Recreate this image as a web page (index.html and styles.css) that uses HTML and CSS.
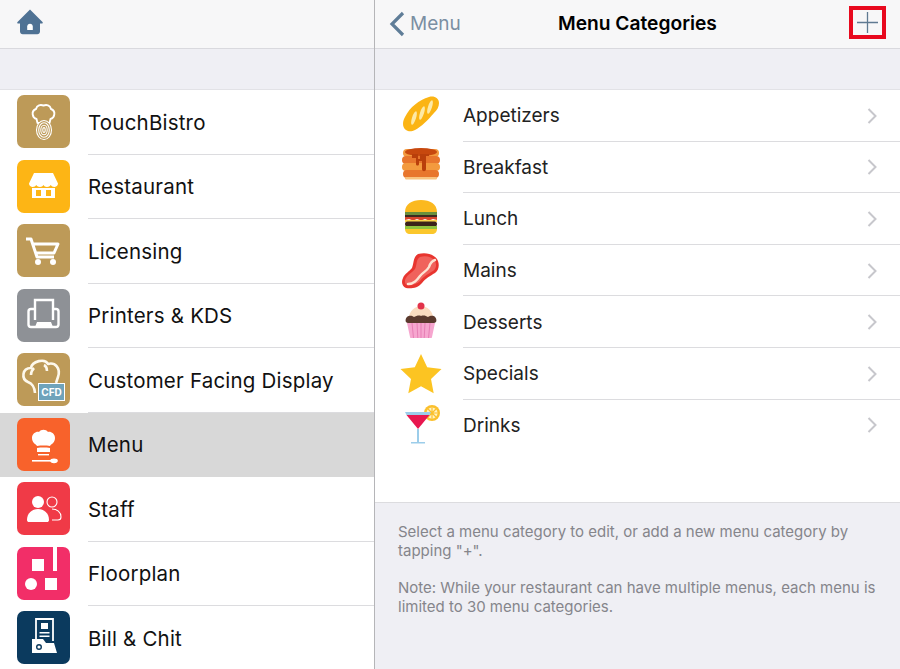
FILE: index.html
```html
<!DOCTYPE html>
<html lang="en">
<head>
  <meta charset="UTF-8">
  <meta name="viewport" content="width=device-width, initial-scale=1.0">
  <title>Menu Categories</title>
  <link rel="stylesheet" href="styles.css">
</head>
<body>
  <div class="app">
    <!-- Left pane: settings -->
    <div class="pane left-pane">
      <header class="navbar">
        <svg class="home-icon" width="28" height="28" viewBox="0 0 28 28">
          <path fill="#4f7294" d="M14 1.500 1.500 14c-.6.7-.2 1.600.7 1.600H4v8c0 1.500 1.200 2.700 2.700 2.700h14.600c1.500 0 2.700-1.200 2.700-2.700v-8h1.800c.9 0 1.300-.9.7-1.600z"/>
          <path fill="#fff" d="M11.200 22v-3.400c0-1.600 1.200-2.800 2.800-2.800s2.800 1.200 2.800 2.800V22z"/>
        </svg>
      </header>
      <div class="band"></div>

      <ul class="settings-list">
        <li class="settings-item">
          <span class="tile tile-gold">
            <svg viewBox="0 0 53 53" width="53" height="53" fill="none" stroke="#fff">
              <path stroke-width="1.900" stroke-linejoin="round" d="M19.500 24c-4-1-6-8-.5-10 1-4 4.500-4.500 7.500-3.500 3-1 6.500-.5 7.500 3.500 5.500 2 3.500 9-.5 10l-1 4H20.500z"/>
              <ellipse cx="27" cy="35" rx="7.500" ry="9.500" fill="#bd9a58" stroke-width="1.100"/>
              <ellipse cx="27" cy="35" rx="5.300" ry="7.200" stroke-width="1.100"/>
              <ellipse cx="27" cy="35" rx="3.200" ry="4.800" stroke-width="1.100"/>
              <ellipse cx="27" cy="35" rx="1.200" ry="2.400" stroke-width="1.100"/>
            </svg>
          </span>
          <span class="item-label">TouchBistro</span>
        </li>
        <li class="settings-item">
          <span class="tile tile-yellow">
            <svg viewBox="0 0 53 53" width="53" height="53" fill="#fff">
              <path d="M17 13h19l5 10.500c0 2-2 3.500-3.700 3.500-1.500 0-2.800-.8-3.600-2-.8 1.200-2 2-3.700 2s-3-.8-3.500-2c-.7 1.200-2 2-3.500 2s-3-.8-3.700-2c-.8 1.200-2 2-3.600 2-1.800 0-3.700-1.500-3.700-3.500z"/>
              <path fill-rule="evenodd" d="M15 28h23v10H15zm4 2v6h5v-6zm10 0v6h5v-6z"/>
            </svg>
          </span>
          <span class="item-label">Restaurant</span>
        </li>
        <li class="settings-item">
          <span class="tile tile-gold">
            <svg viewBox="0 0 53 53" width="53" height="53">
              <path fill="none" stroke="#fff" stroke-width="3" stroke-linejoin="round" d="M9 15h5l6 18h17M16 20h25l-4 9H19"/>
              <circle cx="21" cy="38" r="3" fill="#fff"/>
              <circle cx="36" cy="38" r="3" fill="#fff"/>
            </svg>
          </span>
          <span class="item-label">Licensing</span>
        </li>
        <li class="settings-item">
          <span class="tile tile-grey">
            <svg viewBox="0 0 53 53" width="53" height="53" fill="none" stroke="#fff" stroke-width="2.400">
              <path stroke-linejoin="round" d="M18 20h-4c-1.500 0-2.500 1-2.500 2.500V35.500c0 1.500 1 2.500 2.500 2.500h25c1.500 0 2.500-1 2.500-2.500V22.500c0-1.500-1-2.500-2.500-2.500h-3"/>
              <path d="M18 31V11h18v20"/>
              <path fill="#fff" stroke="none" d="M20 33h14l2 5H18z"/>
            </svg>
          </span>
          <span class="item-label">Printers &amp; KDS</span>
        </li>
        <li class="settings-item">
          <span class="tile tile-gold">
            <svg viewBox="0 0 53 53" width="53" height="53">
              <path fill="none" stroke="#fdf8ec" stroke-width="2.600" stroke-linejoin="round" d="M18 40c-.5-6-2-9-7-11-7-3-6-14 3-14 1-7 14-10 17-4 7-2 13 4 10 13l-2 6"/>
              <path fill="none" stroke="#fdf8ec" stroke-width="2.600" d="M14 22c0-3 1-5 3-7M27 12c2 1 3 3 3 6"/>
              <rect x="21" y="30" width="27" height="18" fill="#fff"/>
              <rect x="22" y="31" width="25" height="16" fill="#6fa3bb"/>
              <text class="cfd-text" x="34.500" y="43">CFD</text>
            </svg>
          </span>
          <span class="item-label">Customer Facing Display</span>
        </li>
        <li class="settings-item active">
          <span class="tile tile-orange">
            <svg viewBox="0 0 53 53" width="53" height="53" fill="#fff">
              <path d="M20 28c-1-2-5-3-5-8s5-7 7-6c2-3 7-3 9 0 2-1 7 1 7 6s-4 6-5 8c-4-.6-9-.6-13 0z"/>
              <path d="M20 30c4-.6 9-.6 13 0v4H20z"/>
              <rect x="21" y="36" width="11" height="1.400"/>
              <rect x="15" y="42" width="22" height="1.600"/>
              <ellipse cx="37" cy="42.800" rx="3.800" ry="2.400"/>
            </svg>
          </span>
          <span class="item-label">Menu</span>
        </li>
        <li class="settings-item">
          <span class="tile tile-red">
            <svg viewBox="0 0 53 53" width="53" height="53">
              <circle cx="21" cy="20" r="6" fill="#fff"/>
              <path fill="#fff" d="M10 38c0-7 5-11 11-11s11 4 11 11c0 1.500-1 2-2 2H12c-1 0-2-.5-2-2z"/>
              <g fill="none" stroke="#fff" stroke-width="1.100">
                <circle cx="35" cy="20" r="5"/>
                <path d="M35 27c5 0 9 3 9 8 0 2-1 3-3 3h-6"/>
              </g>
            </svg>
          </span>
          <span class="item-label">Staff</span>
        </li>
        <li class="settings-item">
          <span class="tile tile-pink">
            <svg viewBox="0 0 53 53" width="53" height="53" fill="#fff">
              <rect x="15" y="12" width="12" height="12"/>
              <rect x="36" y="0" width="4" height="24"/>
              <circle cx="14" cy="37" r="6"/>
              <rect x="28" y="31" width="12" height="12"/>
            </svg>
          </span>
          <span class="item-label">Floorplan</span>
        </li>
        <li class="settings-item">
          <span class="tile tile-navy">
            <svg viewBox="0 0 53 53" width="53" height="53">
              <path fill="none" stroke="#fff" stroke-width="1.800" d="M19 30V8h17v22"/>
              <rect x="24" y="12" width="7" height="6" fill="#fff"/>
              <rect x="22.500" y="21" width="10" height="1.500" fill="#fff"/>
              <rect x="22.500" y="24.500" width="10" height="1.500" fill="#fff"/>
              <path fill="#fff" d="M15 28h11l3 4h8l3 10H15z"/>
              <circle cx="22" cy="36" r="2.300" fill="none" stroke="#0b3a5e" stroke-width="1.400"/>
            </svg>
          </span>
          <span class="item-label">Bill &amp; Chit</span>
        </li>
      </ul>
    </div>

    <!-- Right pane: menu categories -->
    <div class="pane right-pane">
      <header class="navbar detail-bar">
        <div class="back-link">
          <svg width="16" height="26" viewBox="0 0 16 26">
            <path fill="none" stroke="#5f7d98" stroke-width="3.200" d="M14 2 3 13l11 11"/>
          </svg>
          <span>Menu</span>
        </div>
        <div class="nav-title">Menu Categories</div>
        <div class="add-button">
          <svg width="21" height="21" viewBox="0 0 21 21">
            <path fill="none" stroke="#5f7a92" stroke-width="1.300" d="M10.500 0v21M0 10.500h21"/>
          </svg>
        </div>
      </header>
      <div class="band"></div>

      <ul class="category-list">
        <li class="category-item">
          <span class="food-icon">
            <svg viewBox="0 0 44 44" width="44" height="44">
              <g transform="translate(0 -2)">
                <path fill="#fbb414" d="M9 39c-6-2-6-9-3-14C11 15 20 8 30 5c5-1.500 10 1 10 6 0 4-2 7-5 10-6 7-13 14-19 17-2 1-5 1.800-7 1z"/>
                <g fill="#fde9a6">
                  <ellipse cx="15" cy="26" rx="2" ry="7" transform="rotate(18 15 26)"/>
                  <ellipse cx="23" cy="21" rx="2" ry="7" transform="rotate(18 23 21)"/>
                  <ellipse cx="31" cy="15" rx="2" ry="7" transform="rotate(18 31 15)"/>
                </g>
              </g>
            </svg>
          </span>
          <span class="category-name">Appetizers</span>
          <svg class="chevron" width="10" height="16" viewBox="0 0 10 16"><path fill="none" stroke="#c7c7cc" stroke-width="2" d="m1.500 1 7 7-7 7"/></svg>
        </li>
        <li class="category-item">
          <span class="food-icon">
            <svg viewBox="0 0 44 44" width="44" height="44">
              <g transform="translate(0 -4)">
                <rect x="4" y="8" width="36" height="8" rx="4" fill="#f39a3e"/>
                <rect x="3" y="15" width="38" height="8" rx="4" fill="#e8762d"/>
                <rect x="3" y="22" width="38" height="8" rx="4" fill="#f39a3e"/>
                <rect x="4" y="29" width="36" height="8" rx="4" fill="#e8762d"/>
                <rect x="6" y="36" width="32" height="2.500" rx="1.200" fill="#f9c37f"/>
                <ellipse cx="22" cy="11" rx="16" ry="4" fill="#c7480e"/>
                <path fill="#b93f0b" d="M13 13h6v5h2v-5h9v2h-3v13c0 3-4 3-4 0v-8h-3v3c0 2-3 2-3 0v-6h-4z"/>
              </g>
            </svg>
          </span>
          <span class="category-name">Breakfast</span>
          <svg class="chevron" width="10" height="16" viewBox="0 0 10 16"><path fill="none" stroke="#c7c7cc" stroke-width="2" d="m1.500 1 7 7-7 7"/></svg>
        </li>
        <li class="category-item">
          <span class="food-icon">
            <svg viewBox="0 0 44 44" width="44" height="44">
              <g transform="translate(0 -2)">
                <path fill="#fbb91f" d="M6 17C6 9 13 5 22 5s16 4 16 12z"/>
                <path fill="#6a8f3d" d="M6 17h32v3H6z"/>
                <path fill="#3d2a20" d="M6 20h32v2.500H6z"/>
                <path fill="#d8452c" d="M6 22h32v3l-4-1-4 1.500-4-1.500-4 1.500-4-1.500-4 1.500-4-1.500-4 1z"/>
                <path fill="#fbd44a" d="M6 25h32v2H6z"/>
                <rect x="6" y="26.500" width="32" height="5" rx="2.500" fill="#3b2318"/>
                <rect x="6" y="31" width="32" height="3" fill="#8fc33e"/>
                <path fill="#fbc72c" d="M6 34h32c0 3-2 5-5 5H11c-3 0-5-2-5-5z"/>
              </g>
            </svg>
          </span>
          <span class="category-name">Lunch</span>
          <svg class="chevron" width="10" height="16" viewBox="0 0 10 16"><path fill="none" stroke="#c7c7cc" stroke-width="2" d="m1.500 1 7 7-7 7"/></svg>
        </li>
        <li class="category-item">
          <span class="food-icon">
            <svg viewBox="0 0 44 44" width="44" height="44">
              <path fill="#e8352f" d="M19 5c8-2 15 0 19 5 3 5 2 11-2 14-5 3-9 5-13 10-4 5-11 6-16 5-4-2-5-6-3-10 2-5 6-6 9-10 2-5 1-11 6-14z"/>
              <path fill="#f0625c" d="M21 8c6-2 12 0 15 4 2 4 1 8-2 10-5 3-9 5-13 10-3 3-9 5-13 4-2-1-3-4-1-7 2-4 6-5 9-9 2-4 1-10 5-12z"/>
              <path fill="none" stroke="#fde3d3" stroke-width="2.400" stroke-linecap="round" d="M9 35c6 0 9-4 12-8s7-5 9-9c1-3 2-6 6-7"/>
            </svg>
          </span>
          <span class="category-name">Mains</span>
          <svg class="chevron" width="10" height="16" viewBox="0 0 10 16"><path fill="none" stroke="#c7c7cc" stroke-width="2" d="m1.500 1 7 7-7 7"/></svg>
        </li>
        <li class="category-item">
          <span class="food-icon">
            <svg viewBox="0 0 44 44" width="44" height="44">
              <path fill="#fbdcc0" d="M10 18c0-7 6-12 12-12s12 5 12 12z"/>
              <circle cx="22" cy="6" r="3.500" fill="#e2324a"/>
              <path fill="#5b3a2e" d="M8 17c3-2 5-1 7 0 2-1 5-2 7-1 3-1 5 0 7 1 2-1 5-2 7 0 2 2 2 6-1 6H9c-3 0-3-4-1-6z"/>
              <path fill="#f6a6cf" d="M8 23h28l-3 14c0 .6-.5 1-1 1H12c-.5 0-1-.4-1-1z"/>
              <path stroke="#e77fb5" stroke-width="1" d="M13 23l1.500 15M18 23l.8 15M22 23v15M26 23l-.8 15M31 23l-1.500 15"/>
            </svg>
          </span>
          <span class="category-name">Desserts</span>
          <svg class="chevron" width="10" height="16" viewBox="0 0 10 16"><path fill="none" stroke="#c7c7cc" stroke-width="2" d="m1.500 1 7 7-7 7"/></svg>
        </li>
        <li class="category-item">
          <span class="food-icon">
            <svg viewBox="0 0 44 44" width="44" height="44">
              <path fill="#fcc422" d="m22 2 6.200 13.200 14.300 1.800-10.500 10 2.700 14.300L22 34.300 9.300 41.300 12 27 1.500 17l14.300-1.800z"/>
            </svg>
          </span>
          <span class="category-name">Specials</span>
          <svg class="chevron" width="10" height="16" viewBox="0 0 10 16"><path fill="none" stroke="#c7c7cc" stroke-width="2" d="m1.500 1 7 7-7 7"/></svg>
        </li>
        <li class="category-item">
          <span class="food-icon">
            <svg viewBox="0 0 44 44" width="44" height="44">
              <circle cx="33" cy="10" r="8" fill="#fbc02d"/>
              <circle cx="33" cy="10" r="5.500" fill="#fff3c4"/>
              <path stroke="#fbc02d" stroke-width="1.200" d="M33 4.500v11M27.500 10h11M29 6l8 8M37 6l-8 8"/>
              <path fill="#9ccdea" d="M6 9h26l-1.500 3H7.500z"/>
              <path fill="#e8174f" d="M7.500 12h23L19 26z"/>
              <path fill="#9ccdea" d="M18 26h2v13h-2zM12 39h14v1.500H12z"/>
            </svg>
          </span>
          <span class="category-name">Drinks</span>
          <svg class="chevron" width="10" height="16" viewBox="0 0 10 16"><path fill="none" stroke="#c7c7cc" stroke-width="2" d="m1.500 1 7 7-7 7"/></svg>
        </li>
      </ul>

      <div class="help-text">
        <p>Select a menu category to edit, or add a new menu category by tapping "+".</p>
        <p>Note: While your restaurant can have multiple menus, each menu is limited to 30 menu categories.</p>
      </div>
    </div>
  </div>
</body>
</html>
```

FILE: styles.css
```css
:root {
  --nav-bg: #f7f7f8;
  --group-bg: #efeff4;
  --line: #d9d9de;
  --accent: #5f7d98;
}

html, body {
  margin: 0;
  padding: 0;
  height: 100%;
  overflow: hidden;
}

body {
  font-family: Inter, "Noto Sans", sans-serif;
  background-color: #fff;
  color: #111;
}

ul {
  list-style: none;
  margin: 0;
  padding: 0;
}

.app {
  display: flex;
  height: 669px;
}

.pane {
  display: flex;
  flex-direction: column;
  overflow: hidden;
}

.left-pane {
  width: 374px;
  border-right: 1px solid #b5b5b8;
}

.right-pane {
  flex: 1;
  background-color: var(--group-bg);
}

.navbar {
  height: 49px;
  box-sizing: border-box;
  flex: none;
  background-color: var(--nav-bg);
  border-bottom: 1px solid var(--line);
  display: flex;
  align-items: center;
}

.home-icon {
  margin: -4px 0 0 16px;
}

.band {
  height: 41px;
  flex: none;
  background-color: var(--group-bg);
  border-bottom: 1px solid #e2e2e6;
  box-sizing: border-box;
}

/* Settings list */
.settings-list {
  background-color: #fff;
  flex: 1;
}

.settings-item {
  height: 64.500px;
  display: flex;
  align-items: center;
  position: relative;
}

.settings-item::after {
  content: "";
  position: absolute;
  left: 88px;
  right: 0;
  bottom: 0;
  height: 1px;
  background-color: #dcdcdf;
}

.settings-item.active {
  background-color: #d8d8d8;
}

.settings-item.active::after,
.settings-item:last-child::after {
  display: none;
}

.tile {
  width: 53px;
  height: 53px;
  margin: 0 18px 1.500px 17px;
  border-radius: 7px;
  flex: none;
  overflow: hidden;
}

.tile svg {
  display: block;
}

.tile-gold { background-color: #bd9a58; }
.tile-yellow { background-color: #fdb515; }
.tile-grey { background-color: #8e9196; }
.tile-orange { background-color: #f8622b; }
.tile-red { background-color: #f03a47; }
.tile-pink { background-color: #f22e68; }
.tile-navy { background-color: #0b3a5e; }

.cfd-text {
  font-family: Inter, sans-serif;
  font-size: 10px;
  font-weight: 700;
  fill: #fff;
  text-anchor: middle;
}

.item-label {
  font-size: 20.500px;
  letter-spacing: 0.2px;
}

/* Detail header */
.detail-bar {
  justify-content: space-between;
  position: relative;
}

.back-link {
  display: flex;
  align-items: center;
  gap: 5px;
  margin-left: 14px;
  margin-top: -1px;
  font-size: 19px;
  color: #7b8fa3;
}

.nav-title {
  position: absolute;
  left: 183px;
  top: 11px;
  font-size: 19.200px;
  font-weight: 600;
  color: #000;
}

.add-button {
  width: 37px;
  height: 33px;
  box-sizing: border-box;
  border: 4px solid #e8091e;
  margin-right: 14px;
  margin-top: -3px;
  display: flex;
  align-items: center;
  justify-content: center;
}

/* Categories */
.category-list {
  background-color: #fff;
  height: 412px;
  flex: none;
  border-bottom: 1px solid #dcdcdf;
}

.category-item {
  height: 51.600px;
  display: flex;
  align-items: center;
  position: relative;
}

.category-item::after {
  content: "";
  position: absolute;
  left: 88px;
  right: 0;
  bottom: 0;
  height: 1px;
  background-color: #dcdcdf;
}

.category-item:last-child::after {
  display: none;
}

.food-icon {
  width: 44px;
  height: 44px;
  margin: 0 20px 0 24px;
  flex: none;
}

.food-icon svg {
  display: block;
}

.category-name {
  flex: 1;
  font-size: 19px;
  color: #222;
}

.chevron {
  margin-right: 23px;
}

.help-text {
  padding: 19px 20px 0 23px;
  font-size: 15px;
  line-height: 19px;
  color: #85858b;
}

.help-text p {
  margin: 0 0 18px;
}
```
